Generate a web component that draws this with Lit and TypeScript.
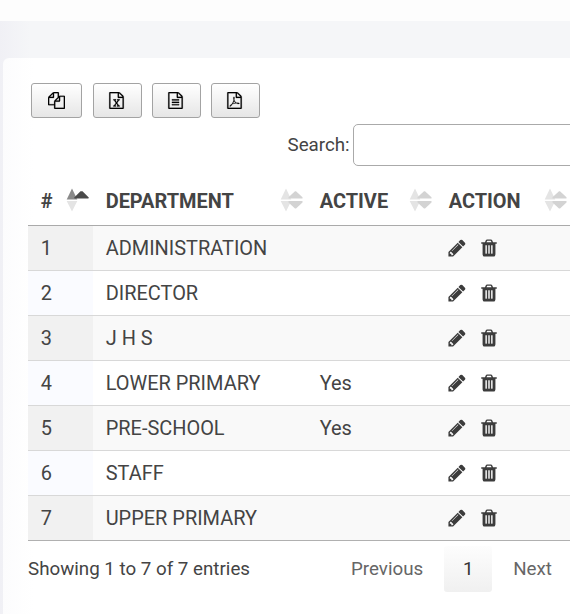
import { LitElement, html, css, svg } from "lit";
import { customElement } from "lit/decorators.js";
import { classMap } from "lit/directives/class-map.js";

const SHEET =
  "M1596 380q28 28 48 76t20 88v1152q0 40-28 68t-68 28h-1344q-40 0-68-28t-28-68v-1600q0-40 28-68t68-28h896q40 0 88 20t76 48zm-444-244v376h376q-10-29-22-41l-313-313q-12-12-41-22zm384 1528v-1024h-416q-40 0-68-28t-28-68v-416h-768v1536h1280z";

const ICONS: Record<string, string> = {
  copy: "M1696 384q40 0 68 28t28 68v1216q0 40-28 68t-68 28h-960q-40 0-68-28t-28-68v-288h-544q-40 0-68-28t-28-68v-672q0-40 20-88t48-76l408-408q28-28 76-48t88-20h416q40 0 68 28t28 68v328q68-40 128-40h416zm-544 213l-299 299h299v-299zm-640-384l-299 299h299v-299zm196 647l316-316v-416h-384v416q0 40-28 68t-68 28h-416v640h512v-256q0-40 20-88t48-76zm956 804v-1152h-384v416q0 40-28 68t-68 28h-416v640h896z",
  excel: SHEET + "m-979-234v106h281v-106h-75l103-161q5-7 10-16.5t7.5-13.5 3.5-4h2q1 4 5 10 2 4 4.5 7.5t6 8 6.5 8.5l107 161h-76v106h291v-106h-68l-192-273 195-282h67v-107h-279v107h74l-103 159q-4 7-10 16.5t-9 13.5l-2 3h-2q-1-4-5-10-6-11-17-23l-106-159h76v-107h-290v107h68l189 272-194 283h-68z",
  csv: SHEET + "m-1024-864q0-14 9-23t23-9h704q14 0 23 9t9 23v64q0 14-9 23t-23 9h-704q-14 0-23-9t-9-23v-64zm736 224q14 0 23 9t9 23v64q0 14-9 23t-23 9h-704q-14 0-23-9t-9-23v-64q0-14 9-23t23-9h704zm0 256q14 0 23 9t9 23v64q0 14-9 23t-23 9h-704q-14 0-23-9t-9-23v-64q0-14 9-23t23-9h704z",
  pdf: SHEET + "m-514-593q33 26 84 56 59-7 117-7 147 0 177 49 16 22 2 52 0 1-1 2l-2 2v1q-6 38-71 38-48 0-115-20t-130-53q-221 24-392 83-153 262-242 262-15 0-28-7l-24-12q-1-1-6-5-10-10-6-36 9-40 56-91.5t132-96.5q14-9 23 6 2 2 2 4 52-85 107-197 68-136 104-262-24-82-30.5-159.5t6.5-127.5q11-40 42-40h22q23 0 35 15 18 21 9 68-2 6-4 8 1 3 1 8v30q-2 123-14 192 55 164 146 238zm-576 411q52-24 137-158-51 40-87.5 84t-49.5 74zm398-920q-15 42-2 132 1-7 7-44 0-3 7-43 1-4 4-8-1-1-1-2t-1-2-1-2q-1-22-13-36 0 1-1 2v2zm-124 661q135-54 284-81-2-1-13-9.5t-16-13.5q-76-67-127-176-27 86-83 197-30 56-45 83zm646-16q-24-24-140-24 76 28 124 28 14 0 18-1 0-1-2-3z",
  pencil: "M491 1536l91-91-235-235-91 91v107h128v128h107zm523-928q0-22-22-22-10 0-17 7l-542 542q-7 7-7 17 0 22 22 22 10 0 17-7l542-542q7-7 7-17zm-54-192l416 416-832 832h-416v-416zm683 96q0 53-37 90l-166 166-416-416 166-165q36-38 90-38 53 0 91 38l235 234q37 39 37 91z",
  trash: "M704 1376v-704q0-14-9-23t-23-9h-64q-14 0-23 9t-9 23v704q0 14 9 23t23 9h64q14 0 23-9t9-23zm256 0v-704q0-14-9-23t-23-9h-64q-14 0-23 9t-9 23v704q0 14 9 23t23 9h64q14 0 23-9t9-23zm256 0v-704q0-14-9-23t-23-9h-64q-14 0-23 9t-9 23v704q0 14 9 23t23 9h64q14 0 23-9t9-23zm-544-992h448l-48-117q-7-9-17-11h-317q-10 2-17 11zm928 32v64q0 14-9 23t-23 9h-96v948q0 83-47 143.5t-113 60.5h-832q-66 0-113-58.5t-47-141.5v-952h-96q-14 0-23-9t-9-23v-64q0-14 9-23t23-9h309l70-167q15-37 54-63t79-26h320q40 0 79 26t54 63l70 167h309q14 0 23 9t9 23z",
};

const icon = (name: string, cls: string) => html`
  <svg class=${cls} viewBox="0 0 1792 1792" aria-hidden="true">${svg`<path d=${ICONS[name]} />`}</svg>`;

const sortBoth = html`<svg class="sort" viewBox="0 0 24 24" aria-hidden="true">
  <path d="M6 .5L11.3 11.5H.7z" fill="#e4e4e4" />
  <path d="M6 23.5L.7 13H11.3z" fill="#e4e4e4" />
  <path d="M15 3.2H16L22.5 9.3V10.5H8.5V9.3z" fill="#d3d3d3" />
  <path d="M15 20.5H16L22.5 14.5V13H8.5V14.5z" fill="#d3d3d3" />
</svg>`;

const sortAsc = html`<svg class="sort" viewBox="0 0 24 24" aria-hidden="true">
  <path d="M6 .5L11.3 11.5H.7z" fill="#8a8a8a" />
  <path d="M6 23.5L.7 13H11.3z" fill="#e4e4e4" />
  <path d="M14.5 3.3H16.5L22.5 9.2V10.5H8.5V9.2z" fill="#4a4a4a" />
</svg>`;

const DEPARTMENTS = [
  { name: "ADMINISTRATION", active: "" },
  { name: "DIRECTOR", active: "" },
  { name: "J H S", active: "" },
  { name: "LOWER PRIMARY", active: "Yes" },
  { name: "PRE-SCHOOL", active: "Yes" },
  { name: "STAFF", active: "" },
  { name: "UPPER PRIMARY", active: "" },
];

@customElement("app-root")
export class AppRoot extends LitElement {
  static styles = css`
    :host {
      display: block;
      height: 614px;
      overflow: hidden;
      background: linear-gradient(90deg, #f0f0f5, #f5f6f8 30px);
      font: 19.95px/28px Roboto, sans-serif;
      color: #444;
    }
    * { box-sizing: border-box; }
    .topbar { height: 21px; background: #fdfdfd; }
    .card {
      margin: 37px 0 0 3px;
      height: 556px;
      padding: 25px 0 0 25px;
      border-radius: 6px 0 0 0;
      background: linear-gradient(90deg, #fcfcfd, #fff 30px);
    }
    .buttons { display: flex; padding-left: 3px; height: 35px; }
    .export {
      display: flex;
      align-items: center;
      justify-content: center;
      width: 49px;
      height: 35px;
      margin: 0 10px 0 0;
      padding: 0 1.5px 0 0;
      border: 1px solid #a3a3a3;
      border-radius: 3px;
      background: linear-gradient(#fff, #e6e6e6);
    }
    .export.wide { width: 51px; margin-right: 11px; padding: 0; }
    .glyph { width: 17px; height: 17px; fill: #000; stroke: #000; stroke-width: 20; }
    .search { display: flex; align-items: center; margin: 6px 0 0 259.5px; height: 42px; }
    .search label { width: 65.5px; flex: none; white-space: nowrap; font-size: 18.75px; }
    .search input {
      width: 240px;
      height: 42px;
      flex: none;
      border: 1px solid #aaa;
      border-radius: 5px;
      background: #fff;
    }
    .grid { width: 549px; border-bottom: 1px solid #b0b0b0; }
    .row { display: grid; grid-template-columns: 65px 214px 129px 141px; height: 45px; }
    .row + .row { border-top: 1px solid #d8d8d8; }
    .row.head + .row { border-top: 0; height: 44px; }
    .row.head { height: 60px; border-bottom: 1px solid #aaa; font-weight: 700; }
    .cell { display: flex; align-items: center; padding: 0 0 0 12.7px; }
    .head .cell { justify-content: space-between; padding: 10px 3px 0 12.7px; }
    .head .cell:last-child { padding-right: 9px; }
    .sort { width: 24px; height: 24px; flex: none; margin-top: -1px; }
    .odd { background: #f9f9f9; }
    .odd .index { background: #f1f1f1; }
    .index { background: #fafbff; }
    .head .index { background: none; }
    .action { width: 20px; height: 20px; fill: #3c3c3c; }
    .cell.actions { gap: 12px; padding: 0 0 0 11px; }
    .footer { display: flex; align-items: flex-start; padding-top: 5px; }
    .info { width: 309px; padding-top: 9px; font-size: 18.75px; }
    .page {
      height: 46px;
      padding: 9px 14px 0;
      font-size: 18.75px;
      color: #666;
    }
    .page.current {
      width: 48px;
      margin: 0 7px;
      padding: 9px 0 0;
      text-align: center;
      color: #333;
      border-radius: 3px;
      background: linear-gradient(#fdfdfd, #f0f0f0);
    }
  `;

  render() {
    return html`
      <div class="topbar"></div>
      <main class="card">
        <div class="buttons">
          ${["copy", "excel", "csv", "pdf"].map(
            (name) => html`<button class=${classMap({ export: true, wide: name === "copy" })} aria-label=${name}>
              ${icon(name, "glyph")}
            </button>`
          )}
        </div>
        <div class="search"><label for="q">Search:</label><input id="q" type="search" /></div>
        <div class="grid">
          <div class="row head">
            <div class="cell index">#${sortAsc}</div>
            <div class="cell">DEPARTMENT${sortBoth}</div>
            <div class="cell">ACTIVE${sortBoth}</div>
            <div class="cell">ACTION${sortBoth}</div>
          </div>
          ${DEPARTMENTS.map(
            (d, i) => html`<div class=${classMap({ row: true, odd: i % 2 === 0 })}>
              <div class="cell index">${i + 1}</div>
              <div class="cell">${d.name}</div>
              <div class="cell">${d.active}</div>
              <div class="cell actions">${icon("pencil", "action")}${icon("trash", "action")}</div>
            </div>`
          )}
        </div>
        <div class="footer">
          <div class="info">Showing 1 to 7 of 7 entries</div>
          <div class="page">Previous</div>
          <div class="page current">1</div>
          <div class="page">Next</div>
        </div>
      </main>
    `;
  }
}
